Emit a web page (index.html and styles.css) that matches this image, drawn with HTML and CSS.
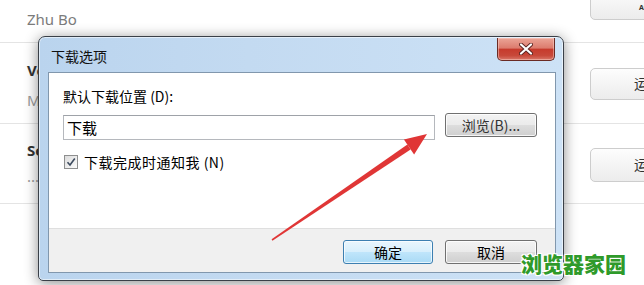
FILE: index.html
```html
<!DOCTYPE html>
<html lang="zh">
<head>
<meta charset="utf-8">
<title>下载选项</title>
<link rel="stylesheet" href="styles.css">
</head>
<body>
<div class="page">
  <div class="list">
    <div class="row r1">
      <div class="info"><div class="name muted">Zhu Bo</div></div>
      <div class="act"><span class="pill">AS</span></div>
    </div>
    <div class="row r2">
      <div class="info"><div class="name">Vc</div><div class="sub">M</div></div>
      <div class="act"><span class="pill">运行</span></div>
    </div>
    <div class="row r3">
      <div class="info"><div class="name">Sc</div><div class="sub">...</div></div>
      <div class="act"><span class="pill">运行</span></div>
    </div>
  </div>

  <div class="dialog">
    <div class="titlebar"><span class="title">下载选项</span></div>
    <span class="close"><svg width="14" height="12" viewBox="0 0 14 12"><path d="M2 1.5 L12 10.5 M12 1.5 L2 10.5" stroke="#5a2320" stroke-width="4" stroke-linecap="round"/><path d="M2 1.5 L12 10.5 M12 1.5 L2 10.5" stroke="#fff" stroke-width="2.2" stroke-linecap="round"/></svg></span>
    <div class="client">
      <div class="body">
        <div class="label">默认下载位置 (D):</div>
        <div class="pathrow">
          <div class="input">下载</div>
          <span class="wbtn browse">浏览(B)...</span>
        </div>
        <div class="check">
          <span class="box"><svg width="10" height="10" viewBox="0 0 10 10"><path d="M1.5 5.2 L4 8 L8.8 1.5" fill="none" stroke="#3c4a5e" stroke-width="1.6"/></svg></span>
          <span>下载完成时通知我 (N)</span>
        </div>
      </div>
      <div class="footer">
        <span class="wbtn ok">确定</span>
        <span class="wbtn cancel">取消</span>
      </div>
    </div>
  </div>

  <svg class="arrow" width="644" height="285" viewBox="0 0 644 285">
    <polygon points="271.6,239.3 272.4,240.7 410.6,149.5 407.4,144.5" fill="#e03636"/>
    <polygon points="427,134 403.9,139.6 414.1,154.4" fill="#e03636"/>
  </svg>

  <div class="watermark">浏览器家园</div>
</div>
</body>
</html>
```
FILE: styles.css
```css
body {
  margin: 0;
}

.page {
  position: relative;
  width: 644px;
  height: 285px;
  overflow: hidden;
  background: #fff;
  font-family: "Noto Sans", "Noto Sans CJK SC", sans-serif;
}

/* background list */
.row {
  display: flex;
  justify-content: space-between;
  box-sizing: border-box;
  border-bottom: 1px solid #e4e4e4;
}
.r1 { height: 43px; }
.r2 { height: 81px; }
.r3 { height: 80px; }

.info { padding-left: 27px; }
.r1 .info { padding-top: 9px; }
.r2 .info { padding-top: 17px; }
.r3 .info { padding-top: 16px; }

.name {
  font-size: 15px;
  line-height: 20px;
  font-weight: bold;
  color: #333;
}
.name.muted {
  font-weight: normal;
  color: #7b7b7b;
}
.sub {
  font-size: 15px;
  line-height: 20px;
  color: #999;
  margin-top: 10px;
}
.r3 .sub { margin-top: 6px; }

.act {
  width: 54px;
  flex: none;
}
.pill {
  display: block;
  width: 116px;
  height: 32px;
  box-sizing: border-box;
  border: 1px solid #cdcdcd;
  border-radius: 5px;
  background: linear-gradient(#fdfdfd, #ececec);
  font-size: 14px;
  line-height: 30px;
  text-align: center;
  color: #333;
}
.r1 .pill {
  margin-top: -12px;
  font-size: 7px;
  line-height: 38px;
  font-weight: bold;
  text-align: left;
  padding-left: 48px;
}
.r2 .pill { margin-top: 25px; }
.r3 .pill { margin-top: 24px; height: 34px; line-height: 32px; }

/* dialog window */
.dialog {
  position: absolute;
  left: 38px;
  top: 36px;
  width: 526px;
  height: 245px;
  box-sizing: border-box;
  display: flex;
  flex-direction: column;
  padding: 0 7px 7px 9px;
  border: 1px solid #3a4048;
  border-radius: 7px 7px 5px 5px;
  background: linear-gradient(90deg, #bad4ee 0%, #c3daf1 40%, #cde2f6 100%);
  box-shadow: 0 2px 14px rgba(0, 0, 0, 0.45), inset 0 0 0 1px rgba(255, 255, 255, 0.55);
  font-family: "Noto Sans CJK SC", sans-serif;
  color: #000;
}

.titlebar {
  height: 35px;
  display: flex;
  align-items: center;
  padding-left: 3px;
  padding-top: 2px;
  box-sizing: border-box;
}
.title {
  font-size: 14px;
  color: #111;
}

.close {
  position: absolute;
  right: 8px;
  top: 1px;
  width: 58px;
  height: 23px;
  box-sizing: border-box;
  display: flex;
  align-items: center;
  justify-content: center;
  border: 1px solid #6a2b24;
  border-top: none;
  border-radius: 0 0 5px 5px;
  background: linear-gradient(#eba597 0%, #dc7c6e 45%, #c63b2d 52%, #c8493a 80%, #d9786a 100%);
  box-shadow: inset 0 0 0 1px rgba(255, 220, 210, 0.45);
}

.client {
  flex: 1;
  display: flex;
  flex-direction: column;
  border: 1px solid #8197ad;
  background: #fff;
}

.body {
  flex: 1;
  padding: 14px 18px 0 14px;
}

.label {
  font-size: 14px;
  line-height: 18px;
}

.pathrow {
  display: flex;
  margin-top: 10px;
}
.input {
  width: 372px;
  height: 25px;
  box-sizing: border-box;
  border: 1px solid #b5b8bd;
  border-top-color: #9ea2a8;
  padding-left: 3px;
  font-size: 15px;
  line-height: 23px;
}

.wbtn {
  display: flex;
  align-items: center;
  justify-content: center;
  height: 24px;
  box-sizing: border-box;
  border: 1px solid #707070;
  border-radius: 3px;
  background: linear-gradient(#f3f3f3 0%, #ebebeb 48%, #dddddd 52%, #cfcfcf 100%);
  box-shadow: inset 0 0 0 1px rgba(255, 255, 255, 0.8);
  font-size: 14px;
  color: #000;
}
.browse {
  width: 92px;
  margin-left: 10px;
  margin-top: -2px;
  color: #333;
}

.check {
  display: flex;
  align-items: center;
  gap: 6px;
  margin-top: 13px;
  margin-left: 1px;
  height: 18px;
  font-size: 14px;
  letter-spacing: 0.5px;
}
.box {
  width: 14px;
  height: 14px;
  box-sizing: border-box;
  display: flex;
  align-items: center;
  justify-content: center;
  border: 1px solid #8e8f8f;
  background: linear-gradient(135deg, #dcdcdc, #fbfbfb);
}

.footer {
  height: 44px;
  box-sizing: border-box;
  border-top: 1px solid #dfdfdf;
  background: #f0f0f0;
  display: flex;
  justify-content: flex-end;
  gap: 12px;
  padding: 11px 18px 0 0;
}
.ok {
  width: 90px;
  border-color: #3c7fb1;
  background: linear-gradient(#e9f6fd 0%, #d8effc 48%, #bfe5fb 52%, #a9daf5 100%);
  box-shadow: inset 0 0 0 1px rgba(255, 255, 255, 0.7);
}
.cancel {
  width: 92px;
}

.arrow {
  position: absolute;
  left: 0;
  top: 0;
}

.watermark {
  position: absolute;
  left: 521px;
  top: 249px;
  font-family: "Noto Sans CJK SC", sans-serif;
  font-size: 21px;
  line-height: 28px;
  font-weight: 900;
  color: #2f9a2a;
  text-shadow: 1px 1px 0 #fff, -1px -1px 0 #fff, 1px -1px 0 #fff, -1px 1px 0 #fff, 0 0 3px #fff;
}
```
